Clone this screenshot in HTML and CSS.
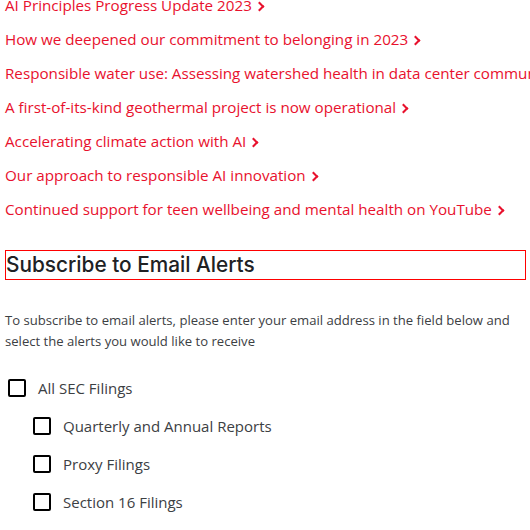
FILE: index.html
```html
<!DOCTYPE html>
<html>
<head>
<meta charset="utf-8">
<link rel="stylesheet" href="styles.css">
</head>
<body>
<div class="page">
  <ul class="links">
    <li><a href="#">AI Principles Progress Update 2023 <span class="chev"></span></a></li>
    <li><a href="#">How we deepened our commitment to belonging in 2023 <span class="chev"></span></a></li>
    <li><a href="#" class="nowrap">Responsible water use: Assessing watershed health in data center communities <span class="chev"></span></a></li>
    <li><a href="#">A first-of-its-kind geothermal project is now operational <span class="chev"></span></a></li>
    <li><a href="#">Accelerating climate action with AI <span class="chev"></span></a></li>
    <li><a href="#">Our approach to responsible AI innovation <span class="chev"></span></a></li>
    <li><a href="#">Continued support for teen wellbeing and mental health on YouTube <span class="chev"></span></a></li>
  </ul>

  <h2 class="heading">Subscribe to Email Alerts</h2>

  <p class="intro">To subscribe to email alerts, please enter your email address in the field below and select the alerts you would like to receive</p>

  <ul class="checks">
    <li class="check"><span class="box"></span><span class="label">All SEC Filings</span></li>
    <li class="check sub"><span class="box"></span><span class="label">Quarterly and Annual Reports</span></li>
    <li class="check sub"><span class="box"></span><span class="label">Proxy Filings</span></li>
    <li class="check sub"><span class="box"></span><span class="label">Section 16 Filings</span></li>
  </ul>
</div>
</body>
</html>
```
FILE: styles.css
```css
html, body {
  margin: 0;
  padding: 0;
  background: #fff;
  overflow: hidden;
}
body {
  font-family: "Open Sans", Roboto, sans-serif;
}
.page {
  padding: 0 4px 0 5px;
}
.links {
  list-style: none;
  margin: -12px 0 0 0;
  padding: 0;
}
.links li {
  line-height: 34px;
  font-size: 15.2px;
  white-space: nowrap;
}
.links a {
  color: #e8112d;
  text-decoration: none;
}
.chev {
  display: inline-block;
  width: 5px;
  height: 5px;
  border-right: 2px solid #e8112d;
  border-top: 2px solid #e8112d;
  transform: rotate(45deg);
  margin-left: 0;
  vertical-align: 1px;
}
.heading {
  margin: 24px 0 0 0;
  border: 1px solid #ff0000;
  height: 28px;
  line-height: 28px;
  font-family: Inter, "Open Sans", sans-serif;
  font-size: 20.8px;
  font-weight: 500;
  color: #202124;
}
.intro {
  margin: 30px 0 0 0;
  font-size: 13.1px;
  line-height: 21px;
  color: #3c4043;
}
.checks {
  list-style: none;
  margin: 17px 0 0 0;
  padding: 0;
}
.check {
  display: flex;
  align-items: center;
  height: 38px;
  padding-left: 3px;
}
.check.sub {
  padding-left: 28px;
}
.box {
  width: 14px;
  height: 14px;
  border: 2px solid #000;
  border-radius: 2px;
  flex: none;
}
.label {
  margin-left: 12px;
  font-size: 15px;
  color: #3c4043;
}
```
